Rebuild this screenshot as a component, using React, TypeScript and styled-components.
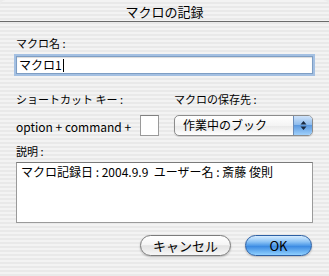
import styled, { createGlobalStyle } from "styled-components";

const Global = createGlobalStyle`
  html, body {
    margin: 0;
    padding: 0;
    background: #ececec;
  }
  * { box-sizing: border-box; }
`;

const font = `"Lucida Grande", "Noto Sans CJK JP", "Noto Sans", sans-serif`;

export default function App() {
  return (
    <>
      <Global />
      <Dialog>
        <TitleBar>マクロの記録</TitleBar>
        <Body>
          <Label $bottom={6}>マクロ名 :</Label>
          <TextField>
            マクロ1<Caret />
          </TextField>

          <Row>
            <Column>
              <Label $bottom={9}>ショートカット キー :</Label>
              <ShortcutLine>
                <span>option + command +</span>
                <KeyBox />
              </ShortcutLine>
            </Column>
            <Column $wide>
              <Label $bottom={9}>マクロの保存先 :</Label>
              <Popup>
                <PopupText>作業中のブック</PopupText>
                <PopupArrows>
                  <svg width="7" height="11" viewBox="0 0 7 11">
                    <path d="M3.5 1 L6.5 4.5 L0.5 4.5 Z" fill="#1a2a40" />
                    <path d="M3.5 10 L6.5 6.5 L0.5 6.5 Z" fill="#1a2a40" />
                  </svg>
                </PopupArrows>
              </Popup>
            </Column>
          </Row>

          <Label $top={8} $bottom={4}>説明 :</Label>
          <TextArea>マクロ記録日 : 2004.9.9 &nbsp;ユーザー名 : 斎藤 俊則</TextArea>

          <Buttons>
            <PillButton>キャンセル</PillButton>
            <PillButton $primary>OK</PillButton>
          </Buttons>
        </Body>
      </Dialog>
    </>
  );
}

const stripes = `repeating-linear-gradient(
  to bottom,
  #f3f3f3 0px,
  #f3f3f3 2px,
  #e9e9e9 2px,
  #e9e9e9 4px
)`;

const Dialog = styled.div`
  width: 329px;
  height: 276px;
  background: ${stripes};
  font-family: ${font};
  color: #000;
  display: flex;
  flex-direction: column;
  overflow: hidden;
  border-radius: 6px 6px 0 0;
`;

const TitleBar = styled.div`
  height: 22px;
  flex: none;
  display: flex;
  align-items: center;
  justify-content: center;
  font-size: 13px;
  border-bottom: 1px solid #6b6b6b;
  padding-top: 1px;
`;

const Body = styled.div`
  display: flex;
  flex-direction: column;
  padding: 14px 16px 0 16px;
`;

const Label = styled.div<{ $top?: number; $bottom?: number }>`
  font-size: 11px;
  line-height: 14px;
  margin-top: ${(p) => p.$top ?? 0}px;
  margin-bottom: ${(p) => p.$bottom ?? 6}px;
`;

const TextField = styled.div`
  height: 18px;
  width: 297px;
  background: #fff;
  border: 1px solid #7e9ec4;
  box-shadow: 0 0 0 2px #a4c0e2, inset 0 1px 1px rgba(0, 0, 0, 0.15);
  font-size: 12px;
  line-height: 16px;
  padding-left: 2px;
  display: flex;
  align-items: center;
`;

const Caret = styled.span`
  display: inline-block;
  width: 1px;
  height: 13px;
  background: #000;
  margin-left: 1px;
`;

const Row = styled.div`
  display: flex;
  margin-top: 18px;
`;

const Column = styled.div<{ $wide?: boolean }>`
  display: flex;
  flex-direction: column;
  width: ${(p) => (p.$wide ? "139px" : "158px")};
`;

const ShortcutLine = styled.div`
  display: flex;
  align-items: center;
  font-size: 12px;
  height: 21px;

  span {
    margin-right: 9px;
    padding-top: 2px;
  }
`;

const KeyBox = styled.div`
  width: 19px;
  height: 21px;
  background: #fff;
  border: 1px solid #9a9a9a;
  border-top-color: #808080;
`;

const Popup = styled.div`
  height: 21px;
  display: flex;
  border: 1px solid #8c8c8c;
  border-radius: 5px;
  overflow: hidden;
  background: linear-gradient(to bottom, #ffffff 0%, #f4f4f4 50%, #e8e8e8 52%, #ffffff 100%);
  box-shadow: 0 1px 1px rgba(0, 0, 0, 0.15);
`;

const PopupText = styled.div`
  flex: 1;
  font-size: 12px;
  line-height: 17px;
  padding-left: 8px;
`;

const PopupArrows = styled.div`
  width: 19px;
  display: flex;
  align-items: center;
  justify-content: center;
  border-left: 1px solid #6b8cb8;
  background: linear-gradient(to bottom, #cfe3fa 0%, #8fbcec 45%, #5d9ae0 50%, #9fd0fb 100%);
`;

const TextArea = styled.div`
  width: 297px;
  height: 61px;
  background: #fff;
  border: 1px solid #9a9a9a;
  border-top-color: #7a7a7a;
  font-size: 12px;
  line-height: 15px;
  padding: 1px 4px;
`;

const Buttons = styled.div`
  display: flex;
  justify-content: flex-end;
  gap: 14px;
  margin-top: 12px;
  padding-right: 1px;
`;

const PillButton = styled.div<{ $primary?: boolean }>`
  height: 21px;
  width: ${(p) => (p.$primary ? "67px" : "91px")};
  border-radius: 11px;
  display: flex;
  align-items: center;
  justify-content: center;
  font-size: 13px;
  border: 1px solid ${(p) => (p.$primary ? "#2d5fa3" : "#7b7b7b")};
  background: ${(p) =>
    p.$primary
      ? "linear-gradient(to bottom, #d6ecff 0%, #8ec4f5 30%, #4f9ae8 50%, #3d8be2 55%, #8fd0ff 100%)"
      : "linear-gradient(to bottom, #ffffff 0%, #f5f5f5 45%, #e2e2e2 52%, #f7f7f7 100%)"};
  box-shadow: 0 1px 2px rgba(0, 0, 0, 0.25);
`;
